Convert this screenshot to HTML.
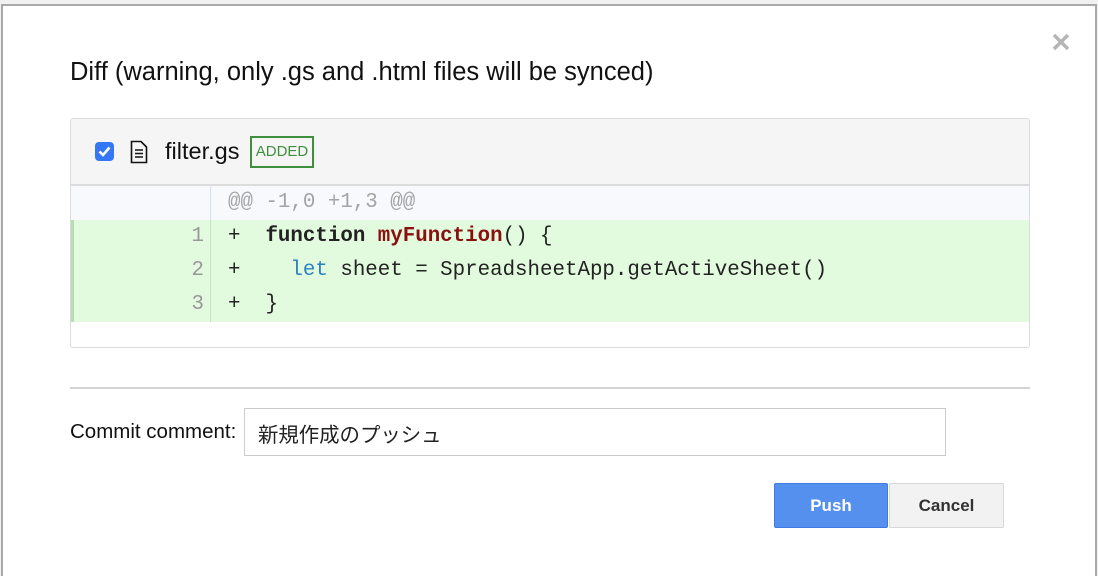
<!DOCTYPE html>
<html><head><meta charset="utf-8"><style>
*{box-sizing:border-box;margin:0;padding:0}
html,body{width:1098px;height:576px;overflow:hidden}
body{background:#f1f1f1;position:relative;font-family:"Liberation Sans","Noto Sans CJK JP",sans-serif;color:#222}
.dlg{position:absolute;left:1px;top:4px;width:1096px;height:572px;background:#fff;border:2px solid #a9a9a9;border-bottom:none}
.abs{position:absolute}
.title{left:70px;top:58px;font-size:25.5px;color:#111}
.close{left:1051px;top:32px}
.panel{left:70px;top:118px;width:960px;height:230px;border:1px solid #dcdcdc;border-radius:3px;overflow:hidden}
.hdr{height:67px;background:#f5f5f5;border-bottom:2px solid #dcdcdc;position:relative}
.cb{position:absolute;left:24px;top:23px;width:19px;height:19px;background:#3478f6;border-radius:4px}
.fname{position:absolute;left:94px;top:19px;font-size:23.5px;color:#111}
.badge{position:absolute;left:179px;top:17px;width:64px;height:32px;border:2px solid #3f8f3f;color:#3f8f3f;font-size:15px;line-height:28px;text-align:center}
.row{height:34px;display:flex;font-family:"Liberation Mono",monospace;font-size:20.8px;line-height:34px}
.gut{width:140px;text-align:right;padding-right:6px;color:#999;border-right:1px solid #c6e3c6}
.code{padding-left:17px;white-space:pre;color:#222}
.hunk{background:#f8f9fc}
.hunk .gut{border-right-color:#d6e1f0}
.hunk .code{color:#a4a4a4}
.add{background:#e2fbde}
.add .gut{border-left:3px solid #b8dcb4;width:140px}
.kw{font-weight:bold}.fn{color:#8a1010;font-weight:bold}.lt{color:#2d82c0}
.sep{left:70px;top:387px;width:960px;height:2px;background:#d3d3d3}
.lbl{left:70px;top:420px;font-size:20.5px;color:#111}
.inp{left:244px;top:408px;width:702px;height:48px;border:1px solid #ccc;font-size:20.4px;padding:9px 0 0 13px;color:#222}
.btn{top:483px;height:45px;font-size:17px;font-weight:bold;text-align:center;line-height:43px;border-radius:2px}
.push{left:774px;width:114px;background:#5690ee;border:1px solid #3e7ae0;color:#fff}
.cancel{left:889px;width:115px;background:#f2f2f2;border:1px solid #d8d8d8;color:#333}
</style></head><body>
<div class="dlg"></div>
<div class="abs title">Diff (warning, only .gs and .html files will be synced)</div>
<svg class="abs close" width="20" height="20" viewBox="0 0 20 20"><path d="M3 3L17 17M17 3L3 17" stroke="#b5b5b5" stroke-width="3.5"/></svg>
<div class="abs panel">
 <div class="hdr">
  <div class="cb"><svg width="19" height="19" viewBox="0 0 19 19"><path d="M4.5 9.5L8 13L14.5 5.5" stroke="#fff" stroke-width="2.6" fill="none"/></svg></div>
  <svg style="position:absolute;left:59px;top:21px" width="18" height="24" viewBox="0 0 18 24"><path d="M1.5 1.5H11L16.5 7V22.5H1.5Z" fill="none" stroke="#111" stroke-width="1.6"/><path d="M5 10H13M5 13.5H13M5 17H13" stroke="#111" stroke-width="1.4"/></svg>
  <div class="fname">filter.gs</div>
  <div class="badge">ADDED</div>
 </div>
 <div class="row hunk"><div class="gut"></div><div class="code">@@ -1,0 +1,3 @@</div></div>
 <div class="row add"><div class="gut">1</div><div class="code">+  <span class="kw">function</span> <span class="fn">myFunction</span>() {</div></div>
 <div class="row add"><div class="gut">2</div><div class="code">+    <span class="lt">let</span> sheet = SpreadsheetApp.getActiveSheet()</div></div>
 <div class="row add"><div class="gut">3</div><div class="code">+  }</div></div>
</div>
<div class="abs sep"></div>
<div class="abs lbl">Commit comment:</div>
<div class="abs inp">新規作成のプッシュ</div>
<div class="abs btn push">Push</div>
<div class="abs btn cancel">Cancel</div>
</body></html>
